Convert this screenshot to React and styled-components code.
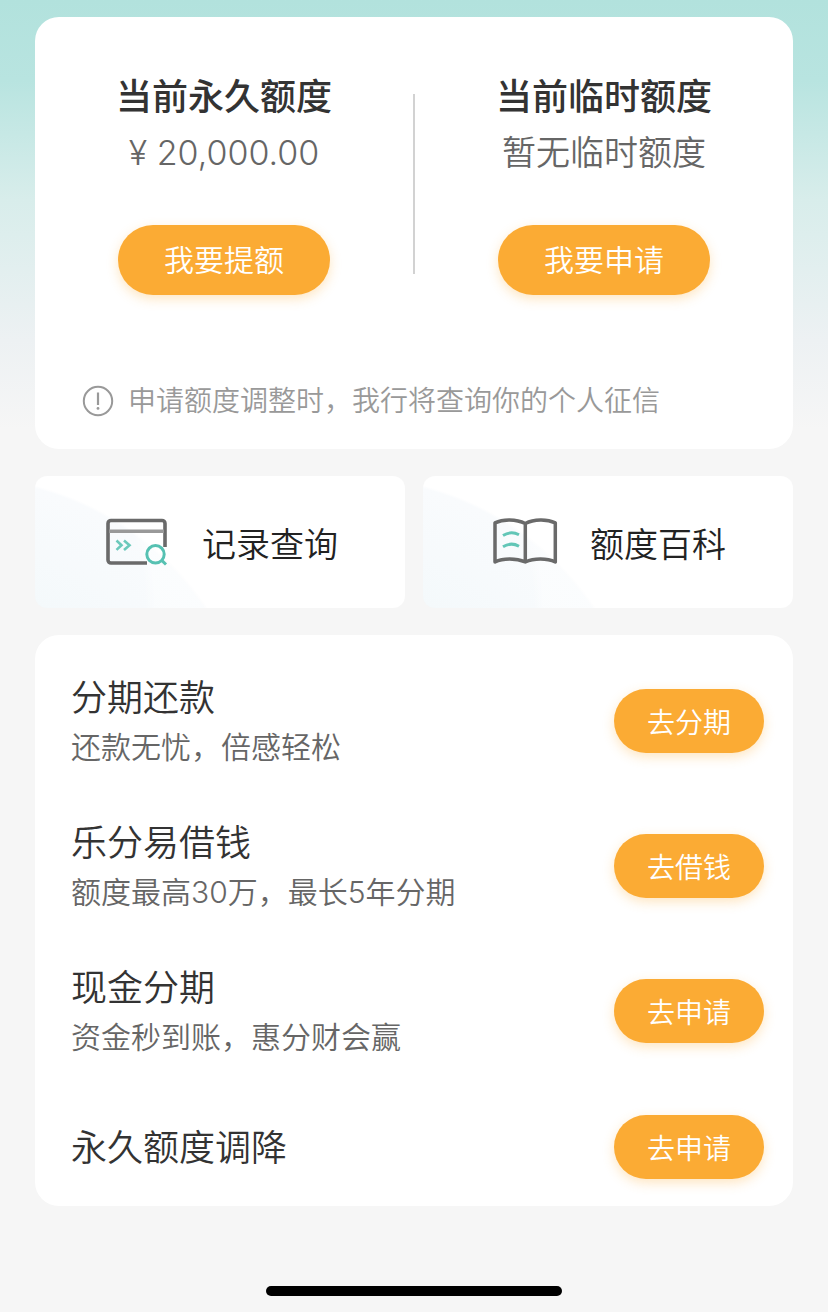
import React from "react";
import styled, { createGlobalStyle } from "styled-components";

const limits = [
  { title: "当前永久额度", value: "¥ 20,000.00", action: "我要提额" },
  { title: "当前临时额度", value: "暂无临时额度", action: "我要申请" },
];

const services = [
  { title: "分期还款", desc: "还款无忧，倍感轻松", action: "去分期" },
  { title: "乐分易借钱", desc: "额度最高30万，最长5年分期", action: "去借钱" },
  { title: "现金分期", desc: "资金秒到账，惠分财会赢", action: "去申请" },
  { title: "永久额度调降", action: "去申请" },
];

const NoticeIcon = () => (
  <svg width="32" height="32" viewBox="0 0 32 32" fill="none" aria-hidden="true">
    <circle cx="16" cy="16" r="14.2" stroke="#999" strokeWidth="2" />
    <path d="M16 7.5v12.5" stroke="#999" strokeWidth="2.2" />
    <circle cx="16" cy="23.4" r="1.4" fill="#999" />
  </svg>
);

const RecordIcon = () => (
  <svg width="68" height="52" viewBox="0 0 68 52" fill="none" aria-hidden="true">
    <path
      d="M63 31V7.500a3 3 0 0 0-3-3H9a3 3 0 0 0-3 3V44a3 3 0 0 0 3 3h36"
      stroke="#6a6a6a"
      strokeWidth="3.6"
    />
    <path d="M7 15.200h55" stroke="#999" strokeWidth="3.4" />
    <path
      d="M14.500 24.500l5 4.700-5 4.700M22 24.500l5.500 4.700-5.500 4.700"
      stroke="#6cc9bb"
      strokeWidth="2.6"
    />
    <circle cx="53.5" cy="38.3" r="8.7" stroke="#56c1b2" strokeWidth="3" />
    <path d="M59.500 44.200l4.500 4.300" stroke="#56c1b2" strokeWidth="3" />
  </svg>
);

const BookIcon = () => (
  <svg width="68" height="52" viewBox="0 0 68 52" fill="none" aria-hidden="true">
    <path
      d="M35.300 7.500C26 3 13 3 5 6.800V46C13 42 26 42 35.300 46C44 42 57 42 65.300 46V6.800C57 3 44 3 35.300 7.500V46"
      stroke="#6a6a6a"
      strokeWidth="3.5"
      strokeLinejoin="round"
    />
    <path
      d="M13 19.500Q21 14.500 29 18.800M13 30.800Q21 25.800 29 30.200"
      stroke="#62c6b7"
      strokeWidth="3"
    />
  </svg>
);

const App = () => (
  <>
    <GlobalStyle />
    <Page>
      <LimitCard>
        <LimitColumns>
          {limits.map((item) => (
            <Limit key={item.title}>
              <LimitTitle>{item.title}</LimitTitle>
              <LimitValue>{item.value}</LimitValue>
              <PillButton $large>{item.action}</PillButton>
            </Limit>
          ))}
          <Divider />
        </LimitColumns>
        <Notice>
          <NoticeIcon />
          <span>申请额度调整时，我行将查询你的个人征信</span>
        </Notice>
      </LimitCard>

      <Tiles>
        <Tile>
          <RecordIcon />
          记录查询
        </Tile>
        <Tile>
          <BookIcon />
          额度百科
        </Tile>
      </Tiles>

      <ServiceList>
        {services.map((item) => (
          <ServiceRow key={item.title}>
            <ServiceText>
              <ServiceTitle>{item.title}</ServiceTitle>
              {item.desc && <ServiceDesc>{item.desc}</ServiceDesc>}
            </ServiceText>
            <PillButton>{item.action}</PillButton>
          </ServiceRow>
        ))}
      </ServiceList>

      <HomeIndicator />
    </Page>
  </>
);

export default App;

const GlobalStyle = createGlobalStyle`
  * {
    box-sizing: border-box;
  }
  body {
    margin: 0;
    background: #f6f6f6;
    font-family: Inter, "Noto Sans CJK SC", sans-serif;
    font-weight: 350;
    color: #333;
  }
  h2, h3, p, ul {
    margin: 0;
    padding: 0;
  }
  button {
    border: none;
    font: inherit;
    cursor: pointer;
  }
`;

const Page = styled.main`
  display: flex;
  flex-direction: column;
  min-height: 100vh;
  padding: 17px 35px 16px;
  background: linear-gradient(
      180deg,
      #b2e2dd 0,
      #b8e4e0 80px,
      #d8edeb 200px,
      #edf1f3 340px,
      #f6f6f6 430px
    )
    no-repeat #f6f6f6;
`;

const LimitCard = styled.section`
  padding: 52px 0 28px;
  border-radius: 24px;
  background: #fff;
`;

const LimitColumns = styled.div`
  display: grid;
  grid-template-columns: 1fr 2px 1fr;
`;

const Limit = styled.div`
  display: flex;
  flex-direction: column;
  align-items: center;
  grid-row: 1;
`;

const Divider = styled.div`
  grid-column: 2;
  grid-row: 1;
  height: 180px;
  margin-top: 25px;
  background: #d2d2d2;
`;

const LimitTitle = styled.h2`
  font-size: 36px;
  line-height: 56px;
  font-weight: 500;
`;

const LimitValue = styled.p`
  margin-bottom: 44px;
  font-size: 34px;
  line-height: 56px;
  color: #666;
`;

const PillButton = styled.button`
  flex-shrink: 0;
  width: ${({ $large }) => ($large ? 212 : 150)}px;
  height: ${({ $large }) => ($large ? 70 : 64)}px;
  padding: ${({ $large }) => ($large ? "0 0 4px" : "0")};
  border-radius: 35px;
  background: #fbab34;
  box-shadow: 0 4px 12px rgba(251, 171, 52, 0.3);
  color: #fff;
  font-size: ${({ $large }) => ($large ? 30 : 28)}px;
`;

const Notice = styled.p`
  display: flex;
  align-items: center;
  gap: 14px;
  margin-top: 86px;
  padding: 0 47px;
  font-size: 28px;
  line-height: 40px;
  color: #999;
`;

const Tiles = styled.div`
  display: grid;
  grid-template-columns: 1fr 1fr;
  gap: 18px;
  margin: 27px 0;
`;

const Tile = styled.button`
  display: flex;
  align-items: center;
  justify-content: center;
  gap: 32px;
  height: 132px;
  padding: 0;
  border-radius: 12px;
  background: radial-gradient(
      circle at -100px 132px,
      transparent 210px,
      rgba(255, 255, 255, 0.4) 220px
    ),
    radial-gradient(circle at -74px 297px, #f4f9fb 180px, #f9fbfd 294px, #fff 297px);
  color: #222;
  && {
    font-size: 34px;
  }
`;

const ServiceList = styled.ul`
  display: flex;
  flex-direction: column;
  gap: 45px;
  padding: 36px 29px 18px 36px;
  border-radius: 24px;
  background: #fff;
  list-style: none;
`;

const ServiceRow = styled.li`
  display: flex;
  align-items: center;
  justify-content: space-between;
  min-height: 82px;
`;

const ServiceText = styled.div`
  padding-top: 2px;
`;

const ServiceTitle = styled.h3`
  font-size: 36px;
  line-height: 50px;
  font-weight: 350;
`;

const ServiceDesc = styled.p`
  font-size: 30px;
  line-height: 48px;
  color: #666;
`;

const HomeIndicator = styled.div`
  align-self: center;
  width: 296px;
  height: 10px;
  margin-top: 80px;
  border-radius: 5px;
  background: #000;
`;
